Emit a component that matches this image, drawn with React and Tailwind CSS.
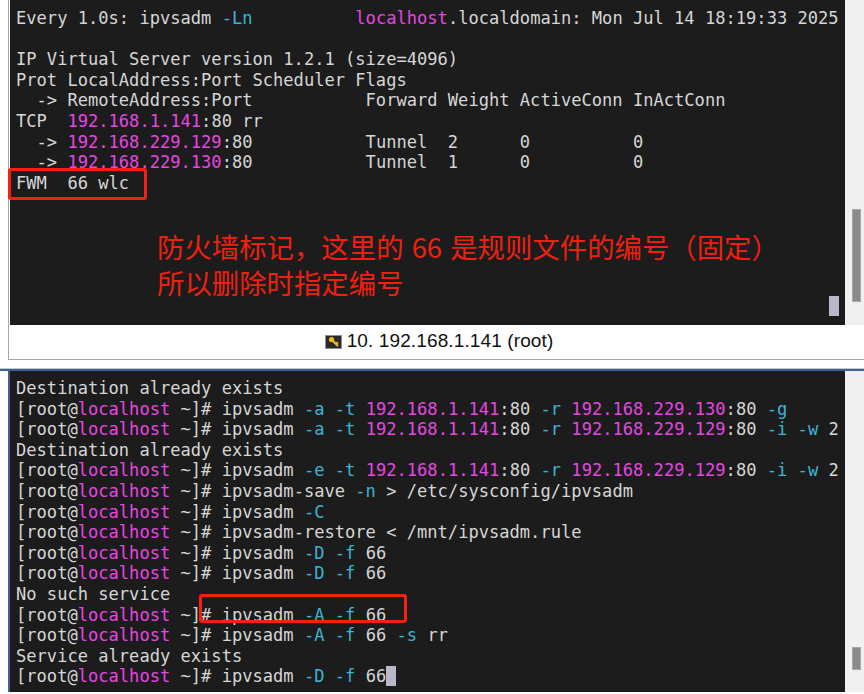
import React from "react";

const topLines = [
  "Every 1.0s: ipvsadm ^-Ln          {localhos}{t}.localdomain: Mon Jul 14 18:19:33 2025",
  "",
  "IP Virtual Server version 1.2.1 (size=4096)",
  "Prot LocalAddress:Port Scheduler Flags",
  "  -> RemoteAddress:Port           Forward Weight ActiveConn InActConn",
  "TCP  {192.168.1.141}:80 rr",
  "  -> {192.168.229.129}:80           Tunnel  2      0          0",
  "  -> {192.168.229.130}:80           Tunnel  1      0          0",
  "FWM  66 wlc",
];

const bottomLines = [
  "Destination already exists",
  "[root@{localhost} ~]# ipvsadm ^-a ^-t {192.168.1.141}:80 ^-r {192.168.229.130}:80 ^-g",
  "[root@{localhost} ~]# ipvsadm ^-a ^-t {192.168.1.141}:80 ^-r {192.168.229.129}:80 ^-i ^-w 2",
  "Destination already exists",
  "[root@{localhost} ~]# ipvsadm ^-e ^-t {192.168.1.141}:80 ^-r {192.168.229.129}:80 ^-i ^-w 2",
  "[root@{localhost} ~]# ipvsadm-save ^-n > /etc/sysconfig/ipvsadm",
  "[root@{localhost} ~]# ipvsadm ^-C",
  "[root@{localhost} ~]# ipvsadm-restore < /mnt/ipvsadm.rule",
  "[root@{localhost} ~]# ipvsadm ^-D ^-f 66",
  "[root@{localhost} ~]# ipvsadm ^-D ^-f 66",
  "No such service",
  "[root@{localhost} ~]# ipvsadm ^-A ^-f 66",
  "[root@{localhost} ~]# ipvsadm ^-A ^-f 66 ^-s rr",
  "Service already exists",
];

// {x} = magenta, ^x = cyan
function TermLine({ text, children }) {
  const parts = text.split(/(\{[^}]+\}|\^[^ ]+)/);
  return (
    <div className="h-[20.6px] whitespace-pre">
      {parts.map((p, i) => {
        if (p.startsWith("{")) return <span key={i} className="text-[#e746e2]">{p.slice(1, -1)}</span>;
        if (p.startsWith("^")) return <span key={i} className="text-[#3db4d6]">{p.slice(1)}</span>;
        return <span key={i}>{p}</span>;
      })}
      {children}
    </div>
  );
}

function KeyIcon() {
  return (
    <svg width="17" height="14" viewBox="0 0 17 14" className="shrink-0">
      <rect x="0.5" y="0.5" width="16" height="13" fill="#2a2a2a" stroke="#8f8f8f" />
      <circle cx="6.5" cy="4.5" r="2.6" fill="#f2b92a" />
      <path d="M7.5 5.5 L13 11 M11 9 L12.8 7.4" stroke="#f2b92a" strokeWidth="2.2" fill="none" />
    </svg>
  );
}

export default function App() {
  return (
    <div className="relative w-[864px] h-[694px] overflow-hidden bg-white font-['DejaVu_Sans_Mono',monospace] text-[17.08px] leading-[20.6px] text-[#d6d6d6]">
      {/* top pane */}
      <div className="ml-2 h-[360px] border-l border-b border-[#a6a6a6] flex flex-col">
        <div className="flex h-[325px] pl-px">
          <div className="relative w-[835px] bg-[#1c1c1c] pl-1.5 pt-2">
            {topLines.map((l, i) => (
              <TermLine key={i} text={l} />
            ))}
            <div className="absolute left-[819px] top-[296px] w-2.5 h-5 bg-[#b8b8c8]" />
          </div>
          <div className="flex-1 bg-[#f0f0f0] pt-[209px] pl-[7px]">
            <div className="w-[9px] h-[93px] bg-[#8a8a8a] border border-[#a8a8a8]" />
          </div>
        </div>
        <div className="flex-1 flex items-center justify-center gap-[5px] pl-[5px] pb-px font-['Liberation_Sans',sans-serif] text-[19px] text-[#111]">
          <KeyIcon />
          <span className="tracking-[0.12px]">10. 192.168.1.141 (root)</span>
        </div>
      </div>

      {/* bottom pane */}
      <div className="mt-2 border-t border-[#c8c8c8]">
        <div className="h-0.5 bg-[#3f5f9e]" />
        <div className="flex h-[321px] ml-2 border-l-2 border-[#3f5f9e]">
          <div className="w-[835px] bg-[#1c1c1c] pl-1.5 pt-[7px]">
            {bottomLines.map((l, i) => (
              <TermLine key={i} text={l} />
            ))}
            <TermLine text="[root@{localhost} ~]# ipvsadm ^-D ^-f 66">
              <span className="inline-block w-2.5 h-5 align-top bg-[#b8b8c8]" />
            </TermLine>
          </div>
          <div className="flex-1 bg-[#f0f0f0] pt-[276px] pl-[7px]">
            <div className="w-[9px] h-[23px] bg-[#8a8a8a] border border-[#a8a8a8]" />
          </div>
        </div>
      </div>

      {/* annotations */}
      <div className="absolute left-[8px] top-[168px] w-[139px] h-[32px] border-[3px] border-[#f5200f] rounded-[3px]" />
      <div className="absolute left-[199px] top-[594px] w-[208px] h-[29px] border-[3px] border-[#f5200f] rounded-[3px]" />
      <div className="absolute left-[157px] top-[228px] font-['Noto_Sans_CJK_SC',sans-serif] text-[27.4px] leading-9 [word-spacing:2px] text-[#f0200f] whitespace-pre">
        <div>防火墙标记，这里的 66 是规则文件的编号（固定）</div>
        <div>所以删除时指定编号</div>
      </div>
    </div>
  );
}
